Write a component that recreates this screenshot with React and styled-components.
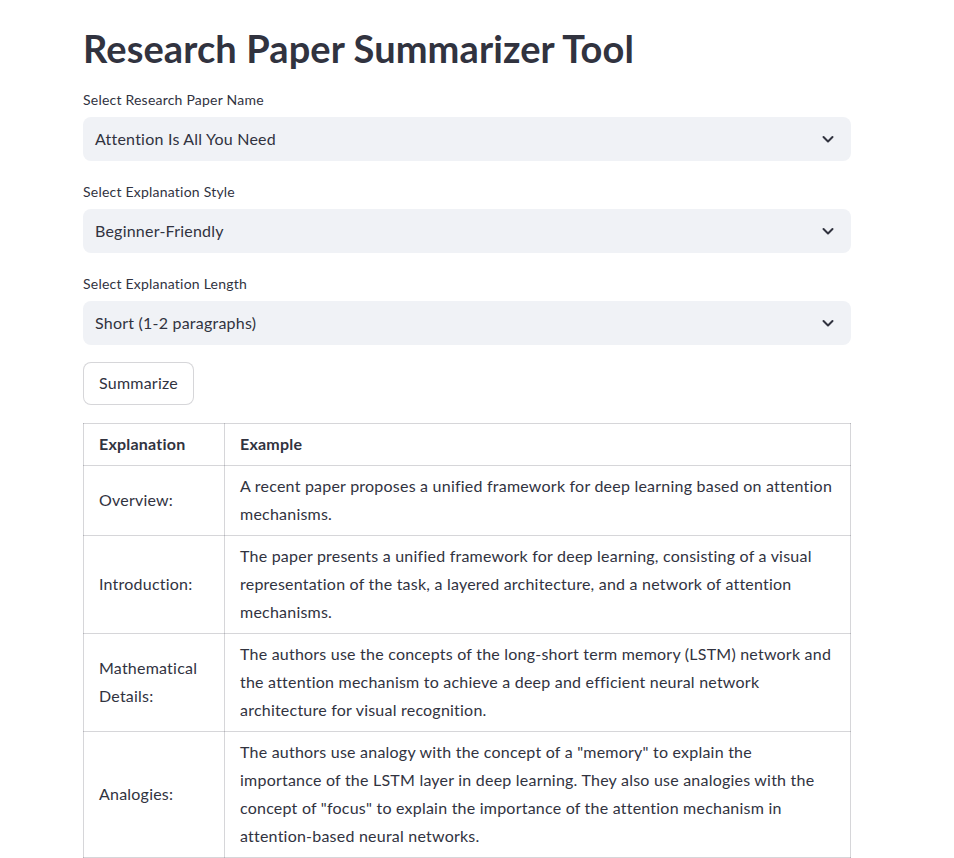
import React from "react";
import styled, { createGlobalStyle } from "styled-components";

const Global = createGlobalStyle`
  html, body { margin: 0; padding: 0; background: #ffffff; }
  body { font-family: Lato, "Noto Sans", sans-serif; color: #31333f; letter-spacing: 0.22px; }
`;

const Main = styled.main`
  width: 768px;
  padding: 22px 0 0 83px;
  display: flex;
  flex-direction: column;
`;

const Title = styled.h1`
  margin: 0 0 16px;
  font-size: 38px;
  line-height: 52px;
  font-weight: 700;
  letter-spacing: 0.1px;
  color: #31333f;
`;

const Field = styled.div`
  display: flex;
  flex-direction: column;
  gap: 7px;
  margin-bottom: ${(p) => p.$after}px;
`;

const Label = styled.label`
  font-size: 14px;
  line-height: 20px;
  height: 20px;
  color: #31333f;
`;

const Select = styled.div`
  height: 44px;
  box-sizing: border-box;
  background: #f0f2f6;
  border-radius: 8px;
  display: flex;
  align-items: center;
  justify-content: space-between;
  padding: 0 15px 1px 12px;
  font-size: 16px;
  color: #31333f;
`;

const Chevron = () => (
  <svg width="16" height="16" viewBox="0 0 16 16" fill="none">
    <path d="M3.5 6l4.5 4.5L12.5 6" stroke="#31333f" strokeWidth="2" strokeLinecap="round" strokeLinejoin="round" />
  </svg>
);

const Button = styled.button`
  align-self: flex-start;
  height: 43px;
  width: 111px;
  box-sizing: border-box;
  border: 1px solid rgba(49, 51, 63, 0.2);
  border-radius: 8px;
  background: #ffffff;
  font-family: inherit;
  letter-spacing: inherit;
  font-size: 16px;
  color: #31333f;
  margin-bottom: 18px;
  padding: 0 0 2px;
  cursor: pointer;
`;

const Table = styled.table`
  width: 768px;
  border-collapse: collapse;
  font-size: 16px;
  color: #31333f;
`;

const Th = styled.th`
  text-align: left;
  font-weight: 700;
  line-height: 28px;
  padding: 6px 15px 7px;
  border: 1px solid rgba(49, 51, 63, 0.2);
  width: ${(p) => (p.$first ? "110px" : "auto")};
`;

const Td = styled.td`
  vertical-align: middle;
  line-height: 28px;
  padding: 6px 15px 7px;
  border: 1px solid rgba(49, 51, 63, 0.2);
  white-space: nowrap;
`;

const Line = styled.span`
  display: block;
`;

const rows = [
  {
    k: ["Overview:"],
    v: [
      "A recent paper proposes a unified framework for deep learning based on attention",
      "mechanisms.",
    ],
  },
  {
    k: ["Introduction:"],
    v: [
      "The paper presents a unified framework for deep learning, consisting of a visual",
      "representation of the task, a layered architecture, and a network of attention",
      "mechanisms.",
    ],
  },
  {
    k: ["Mathematical", "Details:"],
    v: [
      "The authors use the concepts of the long-short term memory (LSTM) network and",
      "the attention mechanism to achieve a deep and efficient neural network",
      "architecture for visual recognition.",
    ],
  },
  {
    k: ["Analogies:"],
    v: [
      'The authors use analogy with the concept of a "memory" to explain the',
      'importance of the LSTM layer in deep learning. They also use analogies with the',
      'concept of "focus" to explain the importance of the attention mechanism in',
      "attention-based neural networks.",
    ],
  },
];

const fields = [
  { label: "Select Research Paper Name", value: "Attention Is All You Need", after: 21 },
  { label: "Select Explanation Style", value: "Beginner-Friendly", after: 21 },
  { label: "Select Explanation Length", value: "Short (1-2 paragraphs)", after: 17 },
];

export default function App() {
  return (
    <>
      <Global />
      <Main>
        <Title>Research Paper Summarizer Tool</Title>
        {fields.map((f) => (
          <Field key={f.label} $after={f.after}>
            <Label>{f.label}</Label>
            <Select>
              <span>{f.value}</span>
              <Chevron />
            </Select>
          </Field>
        ))}
        <Button>Summarize</Button>
        <Table>
          <thead>
            <tr>
              <Th $first>Explanation</Th>
              <Th>Example</Th>
            </tr>
          </thead>
          <tbody>
            {rows.map((r) => (
              <tr key={r.k[0]}>
                <Td>
                  {r.k.map((l) => (
                    <Line key={l}>{l}</Line>
                  ))}
                </Td>
                <Td>
                  {r.v.map((l) => (
                    <Line key={l}>{l}</Line>
                  ))}
                </Td>
              </tr>
            ))}
          </tbody>
        </Table>
      </Main>
    </>
  );
}
